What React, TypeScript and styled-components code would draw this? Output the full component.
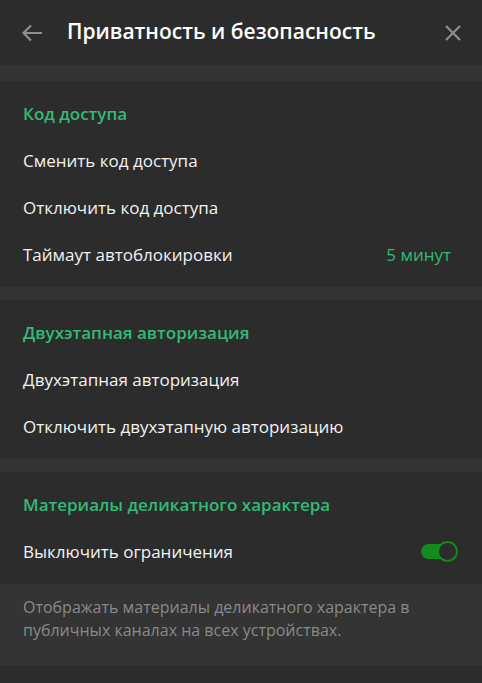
import React from "react";
import styled, { createGlobalStyle } from "styled-components";

const Global = createGlobalStyle`
  html, body { margin: 0; padding: 0; background: #2c2c2c; }
  body { font-family: "Open Sans", "Noto Sans", sans-serif; -webkit-font-smoothing: antialiased; }
`;

const Page = styled.div`
  width: 482px;
  height: 683px;
  background: #2c2c2c;
  display: flex;
  flex-direction: column;
  overflow: hidden;
`;

const Header = styled.div`
  height: 65px;
  display: flex;
  align-items: center;
  padding: 0 20px 0 21px;
  box-sizing: border-box;
`;

const IconButton = styled.div`
  display: flex;
  align-items: center;
  justify-content: center;
  color: #8f8f8f;
`;

const Title = styled.div`
  flex: 1;
  margin-left: 24px;
  color: #ffffff;
  font-size: 21px;
  font-weight: 600;
  margin-top: -3px;
`;

const Band = styled.div<{ $h: number }>`
  height: ${(p) => p.$h}px;
  background: #333433;
  flex-shrink: 0;
`;

const Section = styled.div`
  padding: 8px 0 9px;
`;

const SectionTitle = styled.div`
  height: 48px;
  display: flex;
  align-items: center;
  padding: 0 23px;
  color: #34b977;
  font-size: 17px;
  font-weight: 600;
`;

const Row = styled.div`
  height: 47px;
  display: flex;
  align-items: center;
  justify-content: space-between;
  padding: 0 23px;
  color: #f2f2f2;
  font-size: 17px;
`;

const Value = styled.span`
  color: #34b977;
  margin-right: 8px;
`;

const Toggle = styled.div`
  position: relative;
  width: 37px;
  height: 21px;
  margin-right: 1px;
`;

const Track = styled.div`
  position: absolute;
  left: 0;
  top: 3px;
  width: 34px;
  height: 15px;
  border-radius: 8px;
  background: #128a1d;
`;

const Knob = styled.div`
  position: absolute;
  right: 0;
  top: 0;
  width: 17px;
  height: 17px;
  border-radius: 50%;
  border: 2px solid #128a1d;
  background: #2c2c2c;
`;

const Footer = styled.div`
  background: #333433;
  padding: 12px 23px 24px;
  color: #8a8a8a;
  font-size: 16px;
  line-height: 23px;
`;

const BackIcon = () => (
  <svg width="22" height="18" viewBox="0 0 22 18" fill="none">
    <path d="M21 9H2.5M10 1.5L2.5 9L10 16.5" stroke="currentColor" strokeWidth="2.2" />
  </svg>
);

const CloseIcon = () => (
  <svg width="18" height="18" viewBox="0 0 18 18" fill="none">
    <path d="M2 2L16 16M16 2L2 16" stroke="currentColor" strokeWidth="2.2" />
  </svg>
);

export default function App() {
  return (
    <Page>
      <Global />
      <Header>
        <IconButton>
          <BackIcon />
        </IconButton>
        <Title>Приватность и безопасность</Title>
        <IconButton>
          <CloseIcon />
        </IconButton>
      </Header>
      <Band $h={16} />
      <Section>
        <SectionTitle>Код доступа</SectionTitle>
        <Row>Сменить код доступа</Row>
        <Row>Отключить код доступа</Row>
        <Row>
          <span>Таймаут автоблокировки</span>
          <Value>5 минут</Value>
        </Row>
      </Section>
      <Band $h={13} />
      <Section>
        <SectionTitle>Двухэтапная авторизация</SectionTitle>
        <Row>Двухэтапная авторизация</Row>
        <Row>Отключить двухэтапную авторизацию</Row>
      </Section>
      <Band $h={13} />
      <Section>
        <SectionTitle>Материалы деликатного характера</SectionTitle>
        <Row>
          <span>Выключить ограничения</span>
          <Toggle>
            <Track />
            <Knob />
          </Toggle>
        </Row>
      </Section>
      <Footer>
        Отображать материалы деликатного характера в публичных каналах на всех устройствах.
      </Footer>
    </Page>
  );
}
